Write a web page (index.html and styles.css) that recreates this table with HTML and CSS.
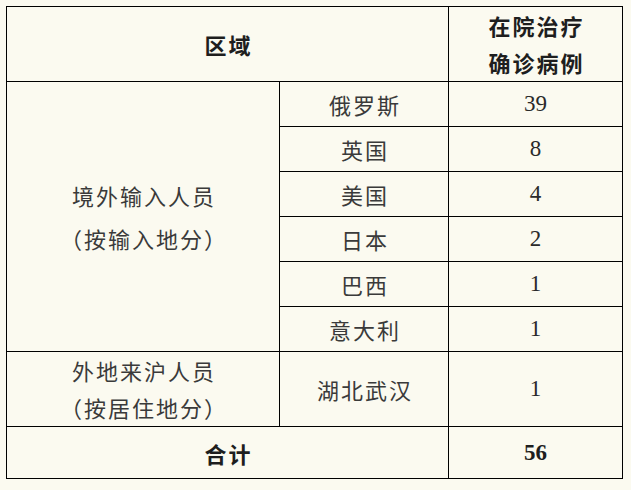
FILE: index.html
```html
<!DOCTYPE html>
<html lang="zh-CN">
<head>
<meta charset="utf-8">
<title>在院治疗确诊病例</title>
<link rel="stylesheet" href="styles.css">
</head>
<body>
<table class="cases">
  <colgroup>
    <col class="c1">
    <col class="c2">
    <col class="c3">
  </colgroup>
  <tr class="head">
    <th colspan="2" class="cjk">区域</th>
    <th class="cjk"><div>在院治疗</div><div>确诊病例</div></th>
  </tr>
  <tr class="row">
    <td rowspan="6" class="cjk group"><div>境外输入人员</div><div>（按输入地分）</div></td>
    <td class="cjk">俄罗斯</td>
    <td class="num">39</td>
  </tr>
  <tr class="row"><td class="cjk">英国</td><td class="num">8</td></tr>
  <tr class="row"><td class="cjk">美国</td><td class="num">4</td></tr>
  <tr class="row"><td class="cjk">日本</td><td class="num">2</td></tr>
  <tr class="row"><td class="cjk">巴西</td><td class="num">1</td></tr>
  <tr class="row"><td class="cjk">意大利</td><td class="num">1</td></tr>
  <tr class="tall">
    <td class="cjk group2"><div>外地来沪人员</div><div>（按居住地分）</div></td>
    <td class="cjk">湖北武汉</td>
    <td class="num">1</td>
  </tr>
  <tr class="total">
    <th colspan="2" class="cjk">合计</th>
    <th class="num">56</th>
  </tr>
</table>
</body>
</html>
```

FILE: styles.css
```css
html, body {
  margin: 0;
  background: #fbfaf0;
}
body {
  padding: 6px;
}
.cases {
  border-collapse: collapse;
  table-layout: fixed;
  width: 616px;
  background: #fbfaf0;
}
.c1 { width: 273px; }
.c2 { width: 169px; }
.c3 { width: 174px; }
.cases th, .cases td {
  border: 1px solid #000;
  padding: 0;
  text-align: center;
  vertical-align: middle;
  line-height: 24px;
}
.cjk {
  font-family: "Noto Sans CJK SC", "Noto Sans", sans-serif;
  font-size: 22px;
  letter-spacing: 2px;
  text-indent: 2px;
  color: #3a3a3a;
  font-weight: 400;
}
th.cjk {
  color: #1e1e1e;
  font-weight: 700;
}
.num {
  font-family: "Liberation Serif", "DejaVu Serif", serif;
  font-size: 23px;
  color: #2a2a2a;
  font-weight: 400;
}
th.num {
  font-weight: 700;
  color: #1e1e1e;
}
.head { height: 75px; }
.head th div { line-height: 37px; }
.row { height: 45px; }
.tall { height: 75px; }
.total { height: 52px; }
.group div { line-height: 43px; }
.group2 div { line-height: 37px; }
```
